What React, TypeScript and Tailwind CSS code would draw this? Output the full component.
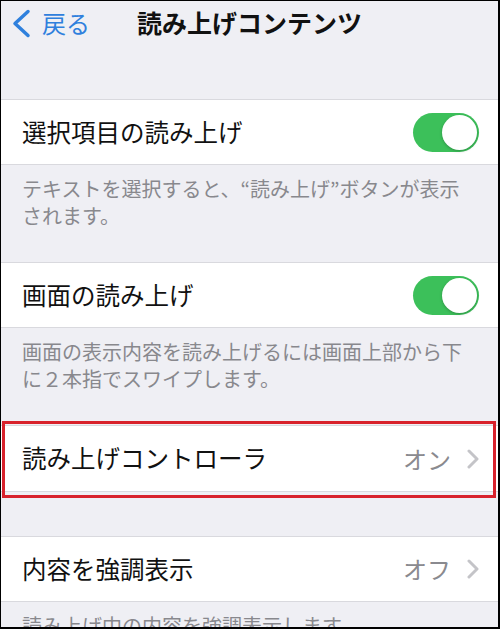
import React from 'react';

const font = { fontFamily: '"Noto Sans CJK JP", "Noto Sans", sans-serif' };

function Toggle() {
  return (
    <div className="relative h-[39px] w-[66px] rounded-full bg-[#3cc05a]">
      <div className="absolute right-[2px] top-[2px] h-[35px] w-[35px] rounded-full bg-white shadow-[0_1px_3px_rgba(0,0,0,0.25)]" />
    </div>
  );
}

function Chevron() {
  return (
    <svg width="12" height="20" viewBox="0 0 12 20" fill="none">
      <polyline
        points="2,2 10,10 2,18"
        stroke="#c4c4c8"
        strokeWidth="3"
        strokeLinecap="round"
        strokeLinejoin="round"
      />
    </svg>
  );
}

function Row({
  label,
  right,
  className = 'h-[66px]',
}: {
  label: string;
  right: React.ReactNode;
  className?: string;
}) {
  return (
    <div
      className={`flex items-center justify-between border-y border-[#d9d9de] bg-white pl-[22px] pr-[21px] ${className}`}
    >
      <span className="text-[24.5px] leading-none text-[#111]">{label}</span>
      {right}
    </div>
  );
}

function Value({ text }: { text: string }) {
  return (
    <div className="flex items-center gap-[16px]">
      <span className="text-[24px] leading-none text-[#8a8a8f]">{text}</span>
      <Chevron />
    </div>
  );
}

function Footer({ children, className = 'h-[97px]' }: { children: React.ReactNode; className?: string }) {
  return (
    <div className={`px-[22px] pt-[10px] text-[20px] leading-[27px] text-[#88888d] ${className}`}>
      {children}
    </div>
  );
}

export default function App() {
  return (
    <div style={font} className="relative h-[629px] w-[500px] overflow-hidden bg-[#efeff4]">
      {/* Nav bar */}
      <div className="relative flex h-[46px] items-center">
        <div className="flex items-center pl-[12px]">
          <svg width="19" height="29" viewBox="0 0 19 29" fill="none">
            <polyline
              points="16,2.5 3,14.5 16,26.5"
              stroke="#2f80dd"
              strokeWidth="3.5"
              strokeLinecap="round"
              strokeLinejoin="round"
            />
          </svg>
          <span className="ml-[11px] text-[24px] leading-none text-[#2f80dd]">戻る</span>
        </div>
        <div className="absolute left-[137px] top-[10px] text-[25px] font-bold leading-none text-[#111]">
          読み上げコンテンツ
        </div>
      </div>

      <div className="h-[53px]" />

      <Row label="選択項目の読み上げ" right={<Toggle />} />
      <Footer>
        テキストを選択すると、“読み上げ”ボタンが表示
        <br />
        されます。
      </Footer>

      <Row label="画面の読み上げ" right={<Toggle />} />
      <Footer>
        画面の表示内容を読み上げるには画面上部から下
        <br />
        に２本指でスワイプします。
      </Footer>

      <div className="relative">
        <Row label="読み上げコントローラ" right={<Value text="オン" />} className="h-[67px]" />
        <div className="pointer-events-none absolute bottom-[-6px] left-[2px] right-[4px] top-[-4px] border-[3px] border-[#d8222c]" />
      </div>

      <div className="h-[44px]" />

      <Row label="内容を強調表示" right={<Value text="オフ" />} />
      <Footer>読み上げ中の内容を強調表示します。</Footer>

      {/* outer frame */}
      <div className="pointer-events-none absolute inset-0 border-b-2 border-l border-r-2 border-t border-black" />
    </div>
  );
}
